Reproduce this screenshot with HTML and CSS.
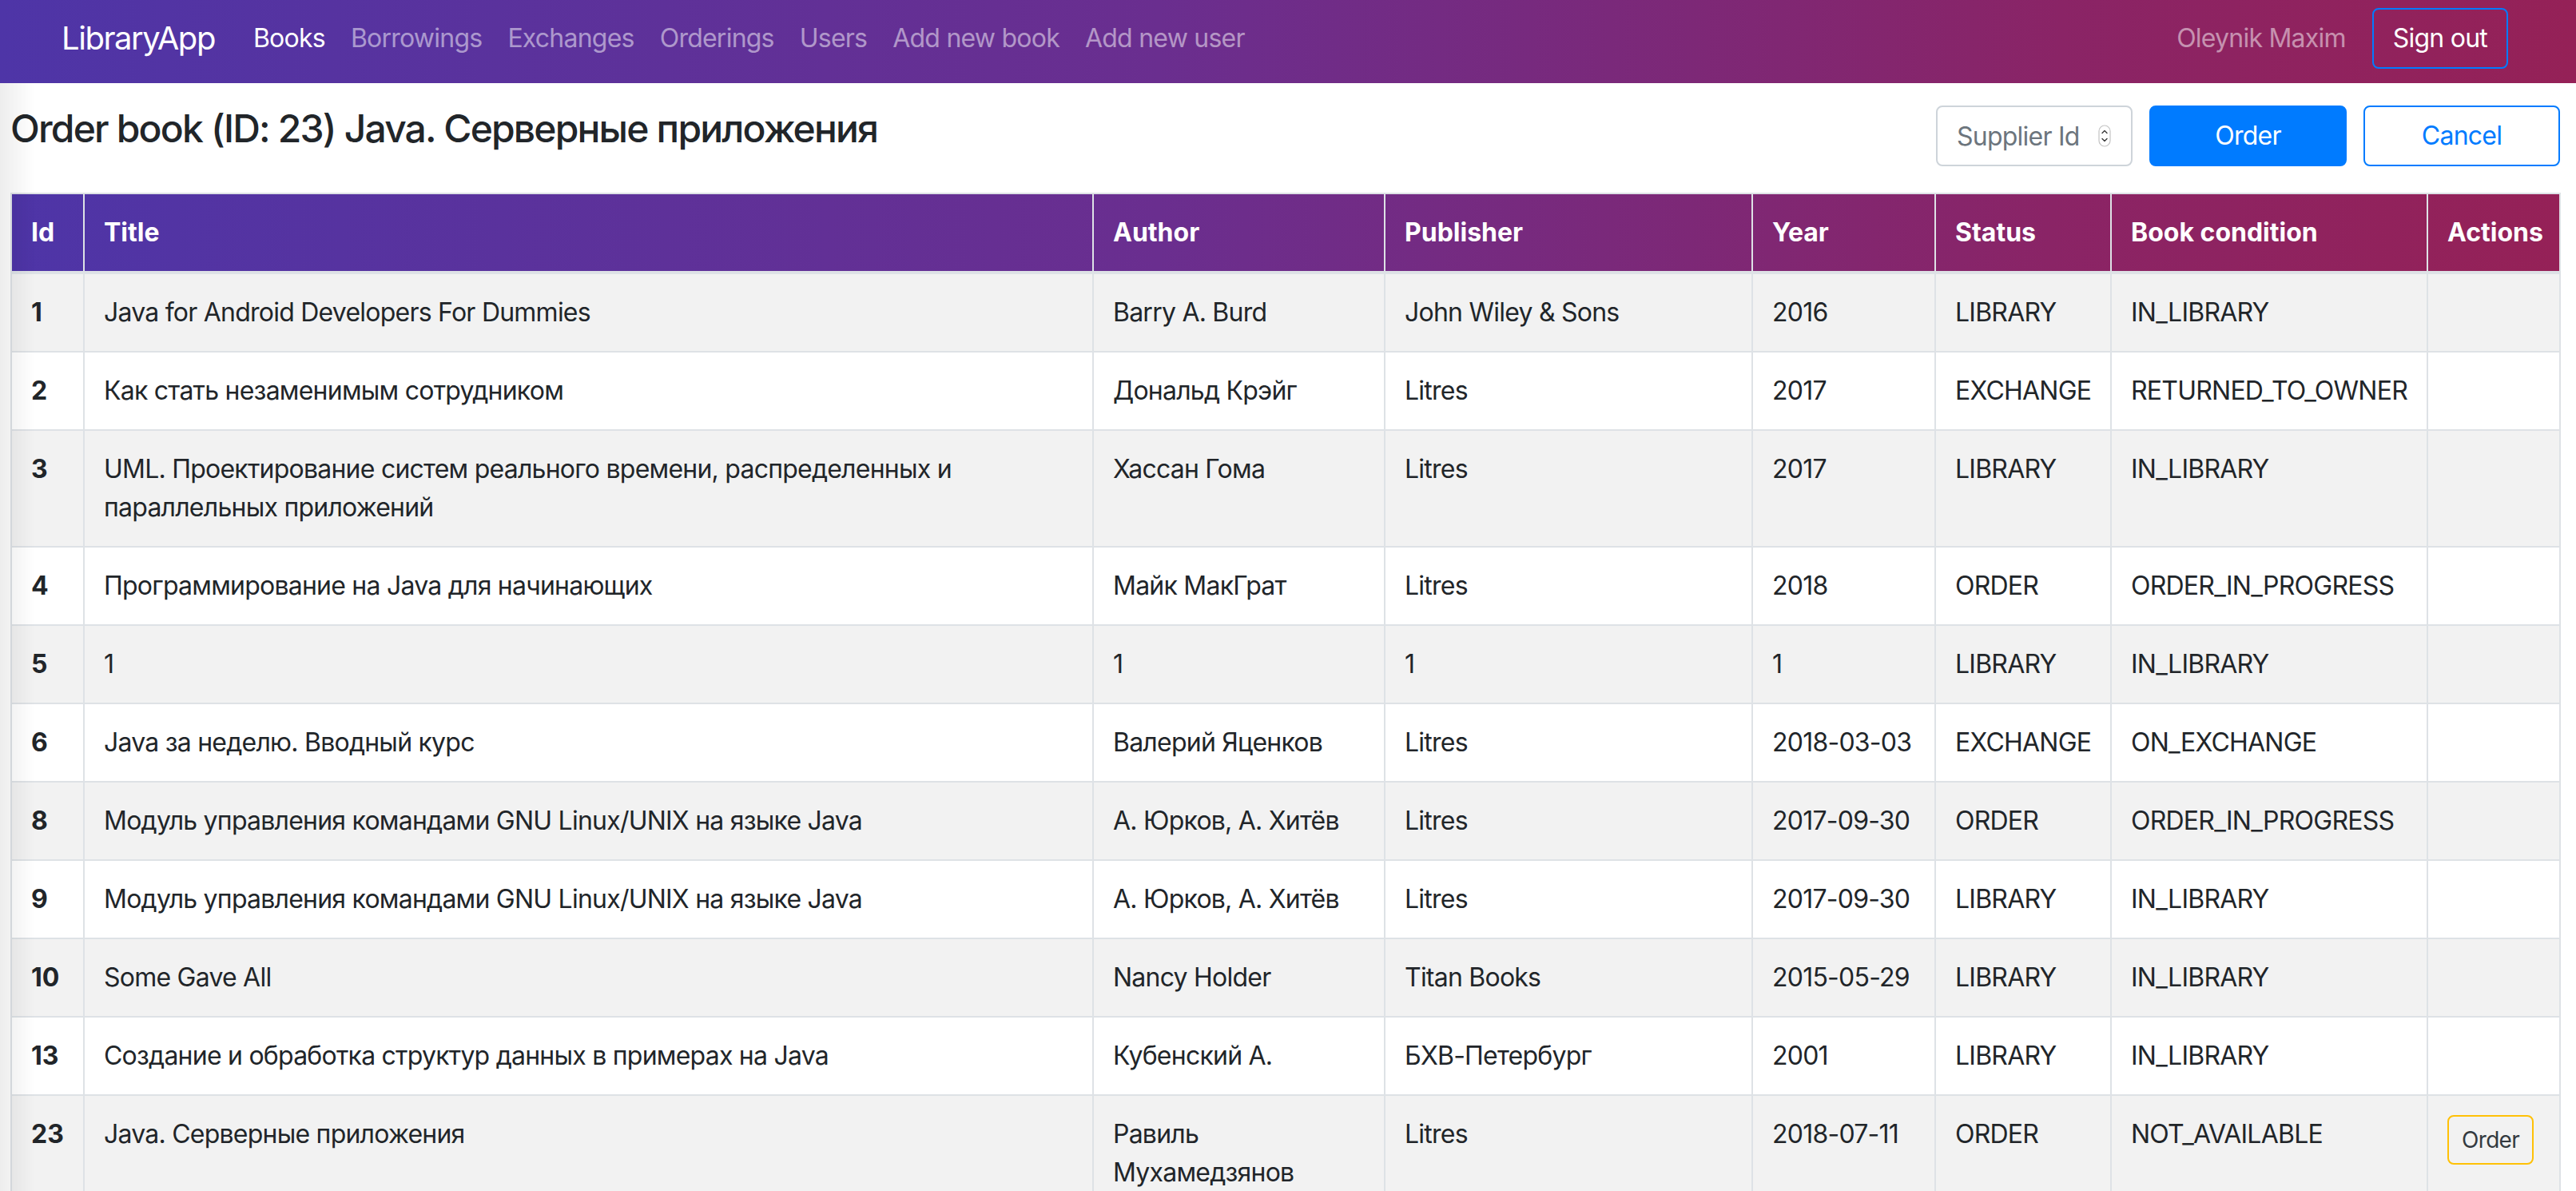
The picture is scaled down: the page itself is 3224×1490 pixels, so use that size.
FILE: index.html
```html
<!DOCTYPE html>
<html lang="ru">
<head>
<meta charset="utf-8">
<title>LibraryApp — Order book</title>
<link rel="stylesheet" href="styles.css">
</head>
<body>
<nav class="navbar">
  <a class="brand" href="#">LibraryApp</a>
  <ul class="nav-links">
    <li><a class="nav-link active" href="#">Books</a></li>
    <li><a class="nav-link" href="#">Borrowings</a></li>
    <li><a class="nav-link" href="#">Exchanges</a></li>
    <li><a class="nav-link" href="#">Orderings</a></li>
    <li><a class="nav-link" href="#">Users</a></li>
    <li><a class="nav-link" href="#">Add new book</a></li>
    <li><a class="nav-link" href="#">Add new user</a></li>
  </ul>
  <div class="nav-right">
    <span class="nav-user">Oleynik Maxim</span>
    <button class="btn btn-outline-primary btn-signout" type="button">Sign out</button>
  </div>
</nav>

<main class="page">
  <div class="page-head">
    <h4 class="page-title">Order book (ID: 23) Java. Серверные приложения</h4>
    <div class="head-actions">
      <label class="supplier">
        <input class="supplier-input" type="text" placeholder="Supplier Id">
        <svg class="spin" width="16" height="28" viewBox="0 0 16 28" aria-hidden="true">
          <rect x="1" y="1" width="14" height="26" rx="7" fill="#fff" stroke="#c4c4c4" stroke-width="1.2"/>
          <path d="M5 10.5 L8 7.5 L11 10.5" fill="none" stroke="#3a3a3a" stroke-width="1.4" stroke-linecap="round" stroke-linejoin="round"/>
          <path d="M5 17.5 L8 20.5 L11 17.5" fill="none" stroke="#3a3a3a" stroke-width="1.4" stroke-linecap="round" stroke-linejoin="round"/>
        </svg>
      </label>
      <button class="btn btn-primary btn-wide" type="button">Order</button>
      <button class="btn btn-outline-primary btn-wide btn-cancel" type="button">Cancel</button>
    </div>
  </div>

  <table class="books">
    <colgroup>
      <col class="c-id"><col class="c-title"><col class="c-author"><col class="c-pub">
      <col class="c-year"><col class="c-status"><col class="c-cond"><col class="c-act">
    </colgroup>
    <thead>
      <tr>
        <th>Id</th><th>Title</th><th>Author</th><th>Publisher</th><th>Year</th><th>Status</th><th>Book condition</th><th>Actions</th>
      </tr>
    </thead>
    <tbody>
      <tr><th>1</th><td>Java for Android Developers For Dummies</td><td>Barry A. Burd</td><td>John Wiley &amp; Sons</td><td class="nw">2016</td><td class="nw">LIBRARY</td><td class="nw">IN_LIBRARY</td><td></td></tr>
      <tr><th>2</th><td>Как стать незаменимым сотрудником</td><td>Дональд Крэйг</td><td>Litres</td><td class="nw">2017</td><td class="nw">EXCHANGE</td><td class="nw">RETURNED_TO_OWNER</td><td></td></tr>
      <tr><th>3</th><td>UML. Проектирование систем реального времени, распределенных и параллельных приложений</td><td>Хассан Гома</td><td>Litres</td><td class="nw">2017</td><td class="nw">LIBRARY</td><td class="nw">IN_LIBRARY</td><td></td></tr>
      <tr><th>4</th><td>Программирование на Java для начинающих</td><td>Майк МакГрат</td><td>Litres</td><td class="nw">2018</td><td class="nw">ORDER</td><td class="nw">ORDER_IN_PROGRESS</td><td></td></tr>
      <tr><th>5</th><td>1</td><td>1</td><td>1</td><td class="nw">1</td><td class="nw">LIBRARY</td><td class="nw">IN_LIBRARY</td><td></td></tr>
      <tr><th>6</th><td>Java за неделю. Вводный курс</td><td>Валерий Яценков</td><td>Litres</td><td class="nw">2018-03-03</td><td class="nw">EXCHANGE</td><td class="nw">ON_EXCHANGE</td><td></td></tr>
      <tr><th>8</th><td>Модуль управления командами GNU Linux/UNIX на языке Java</td><td>А. Юрков, А. Хитёв</td><td>Litres</td><td class="nw">2017-09-30</td><td class="nw">ORDER</td><td class="nw">ORDER_IN_PROGRESS</td><td></td></tr>
      <tr><th>9</th><td>Модуль управления командами GNU Linux/UNIX на языке Java</td><td>А. Юрков, А. Хитёв</td><td>Litres</td><td class="nw">2017-09-30</td><td class="nw">LIBRARY</td><td class="nw">IN_LIBRARY</td><td></td></tr>
      <tr><th>10</th><td>Some Gave All</td><td>Nancy Holder</td><td>Titan Books</td><td class="nw">2015-05-29</td><td class="nw">LIBRARY</td><td class="nw">IN_LIBRARY</td><td></td></tr>
      <tr><th>13</th><td>Создание и обработка структур данных в примерах на Java</td><td>Кубенский А.</td><td>БХВ-Петербург</td><td class="nw">2001</td><td class="nw">LIBRARY</td><td class="nw">IN_LIBRARY</td><td></td></tr>
      <tr><th>23</th><td>Java. Серверные приложения</td><td>Равиль Мухамедзянов</td><td>Litres</td><td class="nw">2018-07-11</td><td class="nw">ORDER</td><td class="nw">NOT_AVAILABLE</td><td><button class="btn btn-sm btn-outline-warning" type="button">Order</button></td></tr>
    </tbody>
  </table>
</main>
</body>
</html>
```

FILE: styles.css
```css
* { box-sizing: border-box; }

html, body {
  margin: 0;
  padding: 0;
}

body {
  font-family: Inter, "Noto Sans", "DejaVu Sans", sans-serif;
  font-size: 32px;
  line-height: 1.5;
  letter-spacing: -0.024em;
  color: #212529;
  background: #fff;
}

/* faint shadow along the left window edge */
body::before {
  content: "";
  position: fixed;
  left: 0;
  top: 104px;
  bottom: 0;
  width: 44px;
  background: linear-gradient(to right, rgba(0,0,0,0.07), rgba(0,0,0,0));
  pointer-events: none;
  z-index: 5;
}

/* ---------- navbar ---------- */
.navbar {
  height: 104px;
  padding: 0 85px 9px 77px;
  display: flex;
  align-items: center;
  background: linear-gradient(to right, #4e35a7 0%, #6a2e8f 45%, #8a2466 80%, #952157 100%);
}

.brand {
  font-size: 40px;
  line-height: 60px;
  letter-spacing: -0.036em;
  color: #fff;
  text-decoration: none;
  margin-right: 32px;
}

.nav-links {
  list-style: none;
  margin: 0;
  padding: 0;
  display: flex;
}

.nav-link {
  display: block;
  padding: 0 16px;
  line-height: 48px;
  color: rgba(255,255,255,0.5);
  text-decoration: none;
}

.nav-link.active { color: #fff; }

.nav-right {
  margin-left: auto;
  display: flex;
  align-items: center;
  gap: 33px;
}

.nav-user {
  color: rgba(255,255,255,0.5);
  line-height: 48px;
}

/* ---------- buttons ---------- */
.btn {
  font-family: inherit;
  font-size: 32px;
  line-height: 48px;
  letter-spacing: -0.024em;
  padding: 12px 24px;
  border: 2px solid transparent;
  border-radius: 8px;
  background: transparent;
  cursor: pointer;
  text-align: center;
}

.btn-primary {
  background: #007bff;
  border-color: #007bff;
  color: #fff;
}

.btn-outline-primary {
  border-color: #007bff;
  color: #007bff;
  background: #fff;
}

.btn-signout {
  background: transparent;
  color: #fff;
}

.btn-wide { width: 247px; }
.btn-cancel { width: 246px; }

.btn-sm {
  font-size: 28px;
  line-height: 42px;
  padding: 8px 16px;
}

.btn-outline-warning {
  border-color: #ffc107;
  color: #343a40;
  background: transparent;
}

/* ---------- page ---------- */
.page {
  padding: 28px 20px 0 13px;
}

.page-head {
  display: flex;
  justify-content: space-between;
  align-items: flex-start;
  margin-bottom: 33px;
}

.page-title {
  margin: 0;
  font-size: 48px;
  font-weight: 500;
  line-height: 1.2;
  letter-spacing: -0.038em;
}

.head-actions {
  display: flex;
  gap: 21px;
}

.supplier {
  position: relative;
  display: block;
  width: 246px;
}

.supplier-input {
  width: 100%;
  height: 76px;
  font-family: inherit;
  font-size: 32px;
  letter-spacing: -0.024em;
  padding: 12px 24px;
  border: 2px solid #ced4da;
  border-radius: 8px;
  color: #495057;
  background: #fff;
  outline: none;
}

.supplier-input::placeholder { color: #6c757d; }

.spin {
  position: absolute;
  left: 203px;
  top: 24px;
}

/* ---------- table ---------- */
.books {
  width: 100%;
  table-layout: fixed;
  border-collapse: collapse;
}

.c-id { width: 91px; }
.c-title { width: 1263px; }
.c-author { width: 365px; }
.c-pub { width: 460px; }
.c-year { width: 229px; }
.c-status { width: 220px; }
.c-cond { width: 396px; }
.c-act { width: 166px; }

.books th,
.books td {
  padding: 24px;
  border: 2px solid #dee2e6;
  vertical-align: top;
  text-align: left;
  line-height: 48px;
}

.books th {
  font-weight: 700;
  letter-spacing: 0;
}

.books thead tr {
  background: linear-gradient(to right, #4e35a7 0%, #6a2e8f 45%, #8a2466 80%, #952157 100%);
}

.books thead th {
  color: #fff;
  border-bottom-width: 4px;
}

.books tbody tr:nth-child(odd) { background: rgba(0,0,0,0.05); }

.nw { white-space: nowrap; }
```
